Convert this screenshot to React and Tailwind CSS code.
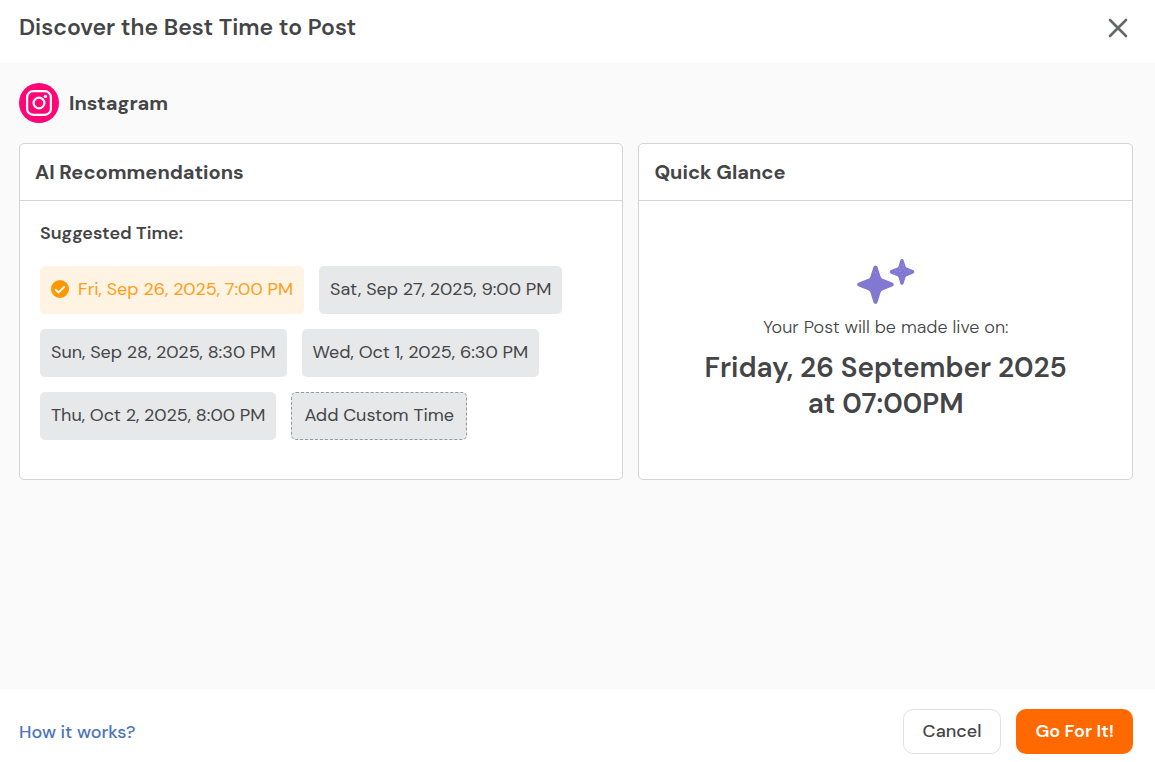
import { useState } from "react";

const SUGGESTED_TIMES = [
  {
    label: "Fri, Sep 26, 2025, 7:00 PM",
    date: "Friday, 26 September 2025",
    time: "07:00PM"
  },
  {
    label: "Sat, Sep 27, 2025, 9:00 PM",
    date: "Saturday, 27 September 2025",
    time: "09:00PM"
  },
  {
    label: "Sun, Sep 28, 2025, 8:30 PM",
    date: "Sunday, 28 September 2025",
    time: "08:30PM"
  },
  {
    label: "Wed, Oct 1, 2025, 6:30 PM",
    date: "Wednesday, 1 October 2025",
    time: "06:30PM"
  },
  {
    label: "Thu, Oct 2, 2025, 8:00 PM",
    date: "Thursday, 2 October 2025",
    time: "08:00PM"
  }
];

const InstagramIcon = () => (
  <svg viewBox="0 0 40 40" className="h-10 w-10 shrink-0" aria-hidden="true">
    <circle cx="20" cy="20" r="20" fill="#ff0676" />
    <g fill="none" stroke="#fff" strokeWidth="2.2">
      <rect x="8.1" y="8.1" width="23.8" height="23.8" rx="6.2" />
      <circle cx="20" cy="20" r="5.4" />
    </g>
    <circle cx="26.4" cy="13.4" r="1.7" fill="#fff" />
  </svg>
);

const CheckIcon = () => (
  <svg viewBox="0 0 18 18" className="h-[18px] w-[18px] shrink-0" aria-hidden="true">
    <circle cx="9" cy="9" r="9" fill="#ff9800" />
    <path
      d="M4.2 9.2 7.6 12.4 13.8 6.4"
      fill="none"
      stroke="#fff"
      strokeWidth="1.9"
    />
  </svg>
);

const SparkleIcon = () => (
  <svg viewBox="0 0 58 46" className="h-[46px] w-[58px]" aria-hidden="true">
    <g fill="#8277d1">
      <path d="M18.5 6.5c1.1 0 1.9.8 2.3 2.2l2.6 8.2c.5 1.6 1.3 2.6 2.9 3.2l8.2 3.2c1.5.6 2.3 1.2 2.3 2.2s-.8 1.6-2.3 2.2l-8.2 3.2c-1.6.6-2.4 1.6-2.9 3.2l-2.6 8.5c-.4 1.4-1.2 2.4-2.3 2.4s-1.9-1-2.3-2.4l-2.6-8.5c-.5-1.6-1.3-2.6-2.9-3.2l-8.2-3.2C1 27.1.2 26.5.2 25.5s.8-1.6 2.3-2.2l8.2-3.2c1.6-.6 2.4-1.6 2.9-3.2l2.6-8.2c.4-1.4 1.2-2.2 2.3-2.2Z" />
      <path d="M45 0c.9 0 1.5.7 1.8 1.7l1.5 5c.3 1 .8 1.6 1.8 2l5.2 2c1.2.4 2 1.1 2 2.1s-.8 1.7-2 2.1l-5.2 2c-1 .4-1.5 1-1.8 2l-1.5 5.2c-.3 1.1-.9 1.9-1.8 1.9s-1.5-.8-1.8-1.9l-1.5-5.2c-.3-1-.8-1.6-1.8-2l-5.2-2c-1.2-.4-2-1.1-2-2.1s.8-1.7 2-2.1l5.2-2c1-.4 1.5-1 1.8-2l1.5-5C43.5.7 44.1 0 45 0Z" />
    </g>
    <g fill="#86b2ea">
      <circle cx="18.5" cy="13.5" r=".6" />
      <circle cx="45" cy="3" r=".6" />
      <circle cx="44" cy="6" r=".6" />
      <circle cx="46.5" cy="6" r=".6" />
      <circle cx="42.5" cy="9" r=".6" />
      <circle cx="46" cy="9" r=".6" />
      <circle cx="39" cy="12" r=".6" />
      <circle cx="43" cy="12.5" r=".6" />
      <circle cx="48" cy="11.5" r=".6" />
      <circle cx="52" cy="12" r=".6" />
      <circle cx="37.5" cy="14.5" r=".6" />
      <circle cx="45.5" cy="15.5" r=".6" />
    </g>
  </svg>
);

const CloseIcon = () => (
  <svg viewBox="0 0 20 20" className="h-5 w-5" aria-hidden="true">
    <path
      d="M2 2 18 18M18 2 2 18"
      stroke="#66686b"
      strokeWidth="2.6"
      strokeLinecap="round"
    />
  </svg>
);

const Card = ({ title, children }) => (
  <section className="flex flex-col rounded-[5px] border border-[#d3d4d6] bg-white">
    <h2 className="border-b border-[#d3d4d6] px-[15px] py-4 text-xl leading-6 font-bold">
      {title}
    </h2>
    {children}
  </section>
);

const TimeButton = ({ label, selected, onClick }) => (
  <button
    type="button"
    aria-pressed={selected}
    onClick={onClick}
    className={`flex h-12 items-center gap-[9px] rounded-[5px] px-[11px] pb-0.5 text-lg ${
      selected
        ? "bg-[#fff3e4] text-[#ff9e16]"
        : "bg-[#e7e8ea] text-[#444547]"
    }`}
  >
    {selected && <CheckIcon />}
    {label}
  </button>
);

export default function App() {
  const [selected, setSelected] = useState(0);
  const current = SUGGESTED_TIMES[selected];

  return (
    <div className="flex min-h-screen flex-col bg-white font-['DM_Sans','Inter',sans-serif] text-[#444547]">
      <header className="flex items-start justify-between px-[19px] pt-3 pb-4">
        <h1 className="text-[23px] leading-[31px] font-semibold">
          Discover the Best Time to Post
        </h1>
        <button type="button" aria-label="Close" className="px-2 pt-[6px] pb-[9px]">
          <CloseIcon />
        </button>
      </header>

      <main className="flex-1 bg-[#fafafa] pt-5 pr-[22px] pl-[19px]">
        <div className="flex items-center gap-[10px]">
          <InstagramIcon />
          <span className="text-xl leading-6 font-bold">Instagram</span>
        </div>

        <div className="mt-5 grid grid-cols-[55fr_45fr] gap-[15px]">
          <Card title="AI Recommendations">
            <div className="px-5 pt-5 pb-[39px]">
              <h3 className="text-lg leading-6 font-semibold">
                Suggested Time:
              </h3>
              <div className="mt-[21px] flex flex-wrap gap-[15px]">
                {SUGGESTED_TIMES.map((item, i) => (
                  <TimeButton
                    key={item.label}
                    label={item.label}
                    selected={i === selected}
                    onClick={() => setSelected(i)}
                  />
                ))}
                <button
                  type="button"
                  className="h-12 rounded-[5px] border border-dashed border-[#96989a] bg-[#e7e8ea] px-3 pb-0.5 text-lg"
                >
                  Add Custom Time
                </button>
              </div>
            </div>
          </Card>

          <Card title="Quick Glance">
            <div className="flex flex-1 flex-col items-center justify-center px-5 text-center">
              <SparkleIcon />
              <p className="mt-[10px] text-lg leading-6 font-light">
                Your Post will be made live on:
              </p>
              <p className="mt-[11px] text-[28px] leading-9 font-semibold">
                {current.date}
                <br />
                at {current.time}
              </p>
            </div>
          </Card>
        </div>
      </main>

      <footer className="flex items-center justify-between pt-5 pr-[22px] pb-2 pl-[19px] text-lg font-medium">
        <a href="#how-it-works" className="text-[#4b73c0]">
          How it works?
        </a>
        <div className="flex gap-[15px]">
          <button
            type="button"
            className="h-[45px] rounded-[10px] border border-[#dfe0e1] bg-white px-[19px] pb-0.5"
          >
            Cancel
          </button>
          <button
            type="button"
            className="h-[45px] rounded-[10px] bg-[#ff6900] px-[19px] pb-0.5 font-semibold text-white"
          >
            Go For It!
          </button>
        </div>
      </footer>
    </div>
  );
}
